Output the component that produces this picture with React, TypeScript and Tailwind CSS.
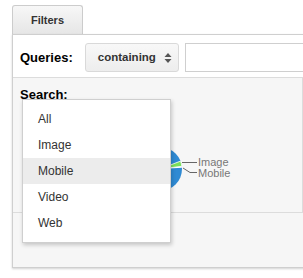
import React from "react";

const searchOptions = ["All", "Image", "Mobile", "Video", "Web"];

function PieChart() {
  // center and radius in svg coordinates
  const cx = 147;
  const cy = 67;
  const r = 22;
  const pt = (deg: number) => {
    const a = (deg * Math.PI) / 180;
    return `${(cx + r * Math.cos(a)).toFixed(2)} ${(cy - r * Math.sin(a)).toFixed(2)}`;
  };
  const wedge = (from: number, to: number) =>
    `M ${cx} ${cy} L ${pt(from)} A ${r} ${r} 0 0 0 ${pt(to)} Z`;

  return (
    <svg width="290" height="110" className="block">
      <circle cx={cx} cy={cy} r={r} fill="#2f8ad3" />
      <path d={wedge(7, 21)} fill="#7be05a" stroke="#ffffff" strokeWidth="0.8" />
      <path d={wedge(3, 7)} fill="#ffffff" />
      <path d="M169 60.5 H184" stroke="#666" strokeWidth="1" fill="none" />
      <path d="M170 66 L177 70.5 H184" stroke="#666" strokeWidth="1" fill="none" />
      <text x="185" y="64" fontSize="11" fill="#777" fontFamily="'Liberation Sans', Arial, sans-serif">
        Image
      </text>
      <text x="185" y="75" fontSize="11" fill="#777" fontFamily="'Liberation Sans', Arial, sans-serif">
        Mobile
      </text>
    </svg>
  );
}

export default function App() {
  return (
    <div className="relative w-[303px] h-[278px] overflow-hidden bg-white pt-[5px] pl-[12px] font-['Liberation_Sans',Arial,sans-serif] text-[#333]">
      {/* Tab */}
      <div className="w-[71px] h-[29px] flex items-center justify-center rounded-t-[3px] border border-b-0 border-[#ccc] bg-gradient-to-b from-[#f7f7f7] to-[#e6e6e6] text-[11px] font-bold text-[#333]">
        Filters
      </div>

      {/* Panel */}
      <div className="w-[320px] h-[234px] border-t border-l border-b border-[#cfcfcf] bg-[#f6f6f6] shadow-[0_1px_2px_rgba(0,0,0,0.18)]">
        {/* Queries row */}
        <div className="flex items-center bg-white pt-[8px] pb-[5px] pl-[7px]">
          <span className="text-[13px] font-bold text-black leading-[15px]">Queries:</span>
          <div className="ml-[12px] w-[94px] h-[29px] flex items-center justify-between pl-[12px] pr-[6px] rounded-[3px] border border-[#d9d9d9] bg-gradient-to-b from-[#f8f8f8] to-[#ededed]">
            <span className="text-[11.5px] font-bold text-[#333]">containing</span>
            <svg width="8" height="12" viewBox="0 0 8 12">
              <path d="M4 1 L7.5 5 H0.5 Z" fill="#555" />
              <path d="M4 11 L7.5 7 H0.5 Z" fill="#555" />
            </svg>
          </div>
          <div className="ml-[6px] w-[140px] h-[29px] border border-[#cfcfcf] bg-white" />
        </div>

        {/* Search / chart box */}
        <div className="w-[290px] h-[136px] border-t border-b border-r border-[#dcdcdc] bg-[#f6f6f6]">
          <div className="pt-[9px] pl-[7px] text-[13px] font-bold text-black leading-[15px]">Search:</div>
          <PieChart />
        </div>
      </div>

      {/* Open dropdown menu */}
      <div className="absolute left-[22px] top-[99px] w-[149px] h-[144px] pt-[6px] bg-white border border-[#cfcfcf] shadow-[1px_2px_4px_rgba(0,0,0,0.2)]">
        {searchOptions.map((opt) => (
          <div
            key={opt}
            className={`h-[26px] flex items-center pl-[15px] text-[12px] text-[#333] ${opt === "Mobile" ? "bg-[#ececec]" : ""}`}
          >
            {opt}
          </div>
        ))}
      </div>
    </div>
  );
}
